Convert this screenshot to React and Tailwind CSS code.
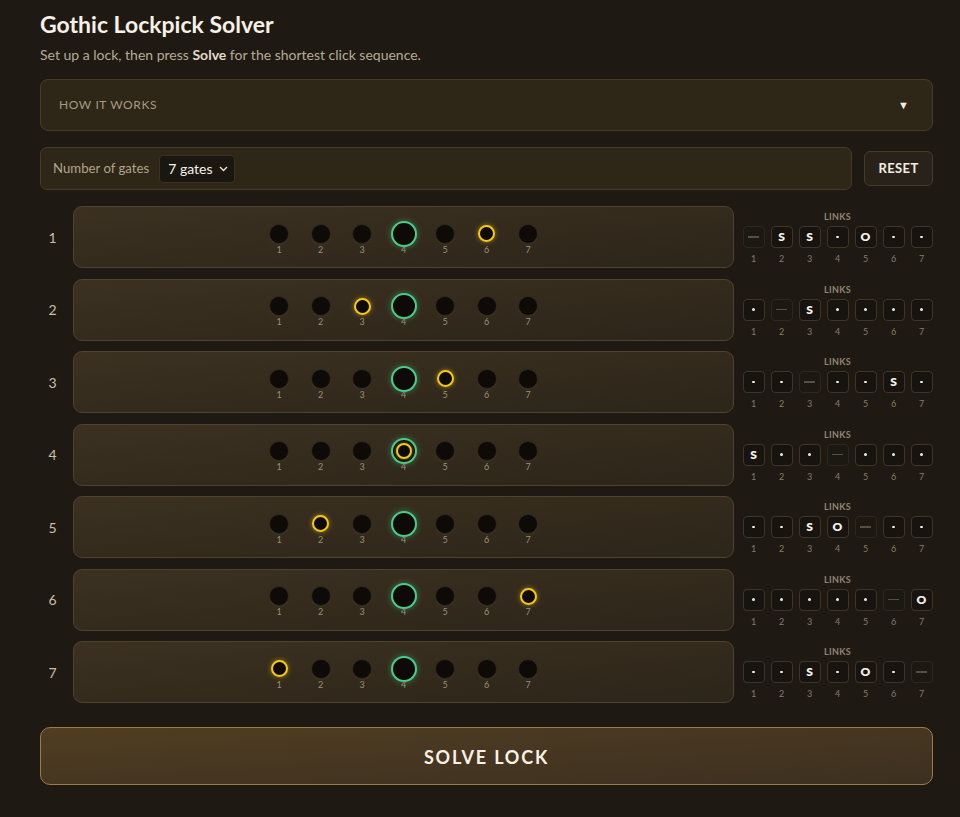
import React from "react";

const PINS = [6, 3, 5, 4, 2, 7, 1];
const LINKS = [
  ["-", "S", "S", ".", "O", ".", "."],
  [".", "-", "S", ".", ".", ".", "."],
  [".", ".", "-", ".", ".", "S", "."],
  ["S", ".", ".", "-", ".", ".", "."],
  [".", ".", "S", "O", "-", ".", "."],
  [".", ".", ".", ".", ".", "-", "O"],
  [".", ".", "S", ".", "O", ".", "-"],
];

function Hole({ index, pin }) {
  const isGate = index === 4;
  const isPin = index === pin;
  let inner;
  if (isGate) {
    inner = (
      <div className="w-[26px] h-[26px] shrink-0 rounded-full border-[2.5px] border-[#45cf88] bg-[#0d0a07] shadow-[0_0_6px_rgba(69,207,136,0.45)] flex items-center justify-center">
        {isPin && (
          <div className="w-[16px] h-[16px] shrink-0 rounded-full border-2 border-[#f5c814] bg-[#0d0a07] shadow-[0_0_4px_rgba(245,200,20,0.5)]" />
        )}
      </div>
    );
  } else if (isPin) {
    inner = (
      <div className="w-[17px] h-[17px] shrink-0 rounded-full border-2 border-[#f5c814] bg-[#0d0a07] shadow-[0_0_5px_rgba(245,200,20,0.55)]" />
    );
  } else {
    inner = (
      <div className="w-[20px] h-[20px] shrink-0 rounded-full bg-[#0d0a07] border border-[#2f281d] shadow-[0_1px_1px_rgba(255,230,180,0.06)]" />
    );
  }
  return (
    <div className="w-[41.5px] flex flex-col items-center">
      <div className="w-[20px] h-[20px] flex items-center justify-center">{inner}</div>
      <div className="text-[9px] leading-[11px] text-[#9a8f7b]">{index}</div>
    </div>
  );
}

function LinkBox({ v }) {
  const self = v === "-";
  return (
    <div
      className={
        "w-[22px] h-[22px] rounded-[4px] border flex items-center justify-center " +
        (self ? "border-[#2e271c] bg-[#1c1812]" : "border-[#3e3526] bg-[#17130e]")
      }
    >
      {self ? (
        <div className="w-[11px] h-[1.5px] bg-[#555040]" />
      ) : v === "." ? (
        <div className="w-[2.5px] h-[2.5px] rounded-full bg-[#f1ebe0]" />
      ) : (
        <span className="text-[12px] font-extrabold leading-none text-[#f6f1e8]">{v}</span>
      )}
    </div>
  );
}

function Row({ n, pin, links }) {
  return (
    <div className="flex items-center h-[62px]">
      <div className="w-[25px] text-center text-[14px] text-[#c9bea8]">{n}</div>
      <div className="ml-[8px] w-[661px] h-full rounded-[9px] border border-[#4f4230] bg-gradient-to-br from-[#3c3121] to-[#2c2519] flex items-center justify-center">
        <div className="flex mt-[4px]">
          {[1, 2, 3, 4, 5, 6, 7].map((i) => (
            <Hole key={i} index={i} pin={pin} />
          ))}
        </div>
      </div>
      <div className="ml-[8px] flex-1 flex flex-col items-center mt-[2px]">
        <div className="text-[9px] font-bold leading-[11px] tracking-[0.3px] text-[#8f8470] mb-[4px]">LINKS</div>
        <div className="flex gap-[6px]">
          {links.map((v, i) => (
            <LinkBox key={i} v={v} />
          ))}
        </div>
        <div className="flex gap-[6px] mt-[5px]">
          {links.map((v, i) => (
            <div key={i} className="w-[22px] text-center text-[9px] leading-[12px] text-[#857a67]">
              {i + 1}
            </div>
          ))}
        </div>
      </div>
    </div>
  );
}

export default function App() {
  return (
    <div
      className="min-h-[817px] w-full bg-[#1e1a13] text-[#f3ece0]"
      style={{ fontFamily: "Lato, 'Noto Sans', sans-serif" }}
    >
      <div className="pl-[40px] pr-[27px] pt-[9px] pb-[31px]">
        <h1 className="text-[23px] leading-[30px] font-bold text-[#f6f0e6]">Gothic Lockpick Solver</h1>
        <p className="mt-[7px] text-[14px] leading-[18px] text-[#b5aa95]">
          Set up a lock, then press <b className="font-bold text-[#e5dccb]">Solve</b> for the shortest click sequence.
        </p>

        <div className="mt-[15px] h-[52px] rounded-[8px] border border-[#463b27] bg-[#2e2617] flex items-center justify-between pl-[18px] pr-[23px]">
          <span className="text-[12px] tracking-[0.6px] text-[#a69a82]">HOW IT WORKS</span>
          <span className="text-[11px] text-[#f3ece0]">▼</span>
        </div>

        <div className="mt-[16px] flex items-center gap-[12px]">
          <div className="flex-1 h-[43px] rounded-[7px] border border-[#463b27] bg-[#2e2617] flex items-center pl-[12px]">
            <span className="text-[13.2px] text-[#b0a48c]">Number of gates</span>
            <div className="ml-[10px] h-[28px] w-[76px] rounded-[4px] border border-[#3a3122] bg-[#1a1610] flex items-center justify-between pl-[8px] pr-[6px]">
              <span className="text-[14px] text-[#f6f1e8]">7 gates</span>
              <svg width="9" height="6" viewBox="0 0 9 6" fill="none">
                <path d="M1 1l3.5 3.5L8 1" stroke="#e8e0d2" strokeWidth="1.4" />
              </svg>
            </div>
          </div>
          <div className="w-[69px] h-[35px] rounded-[6px] border border-[#463b27] bg-[#29221a] flex items-center justify-center">
            <span className="text-[13px] font-bold tracking-[0.4px] text-[#f3ece0]">RESET</span>
          </div>
        </div>

        <div className="mt-[16px] flex flex-col gap-[10.5px]">
          {PINS.map((p, i) => (
            <Row key={i} n={i + 1} pin={p} links={LINKS[i]} />
          ))}
        </div>

        <div className="mt-[24px] h-[58px] rounded-[10px] border border-[#9c7b49] bg-gradient-to-br from-[#503d22] to-[#3d3020] flex items-center justify-center">
          <span className="text-[18px] font-bold tracking-[1.8px] text-[#f8f2e6] mt-[2px]">SOLVE LOCK</span>
        </div>
      </div>
    </div>
  );
}
